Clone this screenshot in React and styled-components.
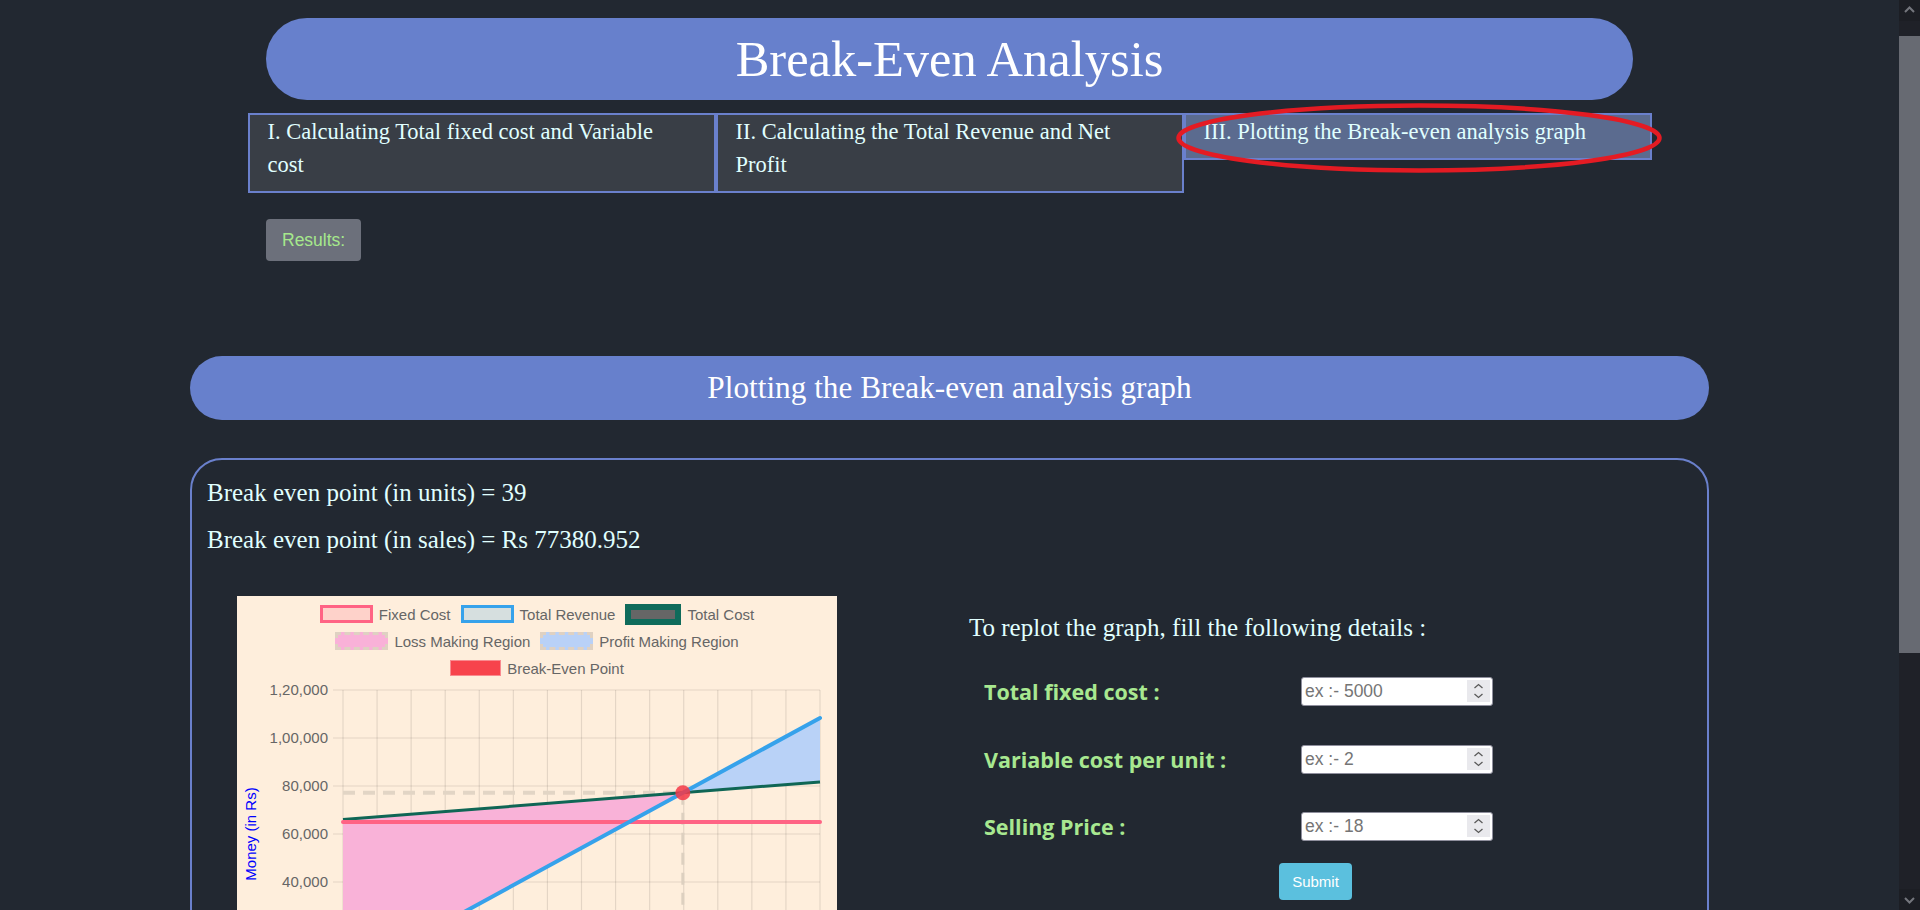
import React from 'react';
import styled, { createGlobalStyle } from 'styled-components';

const GlobalStyle = createGlobalStyle`
  html, body {
    margin: 0;
    padding: 0;
  }
  body {
    background: #222831;
    font-family: 'Liberation Serif', 'Times New Roman', serif;
    overflow-x: hidden;
  }
`;

const Page = styled.div`
  width: calc(100% - 21px);
  min-height: 1200px;
  padding-top: 18px;
  box-sizing: border-box;
`;

// imitation of the browser's dark scrollbar on the right edge
const ScrollBar = styled.div`
  position: fixed;
  top: 0;
  right: 0;
  bottom: 0;
  width: 21px;
  display: flex;
  flex-direction: column;
  background: #1f2128;
`;

const ScrollButton = styled.svg`
  display: block;
  width: 21px;
  height: 21px;
  background: #1c1e24;
`;

const ScrollTrack = styled.div`
  flex: 1;
  padding-top: 15px;
`;

const ScrollThumb = styled.div`
  height: 617px;
  background: #676a72;
`;

const Top = styled.div`
  width: 1404px;
  margin: 0 auto;
`;

const TitlePill = styled.div`
  width: 1367px;
  height: 82px;
  margin: 0 auto;
  border-radius: 41px;
  background: #6780cc;
  display: flex;
  align-items: center;
  justify-content: center;

  h1 {
    margin: 0;
    font-size: 50.5px;
    font-weight: normal;
    color: #ffffff;
  }
`;

const Tabs = styled.div`
  display: grid;
  grid-template-columns: repeat(3, 468px);
  align-items: start;
  margin-top: 13px;
`;

const Tab = styled.div`
  position: relative;
  box-sizing: border-box;
  border: 2px solid #6a80cc;
  background: ${(p) => (p.$active ? '#5b6b8f' : '#393e46')};
  color: #e0ffff;
  font-size: 22.5px;
  line-height: 33px;
  padding: 0 40px 10px 18px;
`;

const Marker = styled.svg`
  position: absolute;
  left: -10px;
  top: -12px;
  width: 486px;
  height: 70px;
  overflow: visible;
  pointer-events: none;
`;

const ResultsButton = styled.button`
  display: block;
  margin: 26px 0 0 18.5px;
  height: 42px;
  padding: 0 16px;
  border: none;
  border-radius: 4px;
  background: #6c707b;
  color: #a6e88c;
  font-family: 'Liberation Sans', Arial, sans-serif;
  font-size: 17.5px;
`;

const SectionPill = styled.div`
  width: 1519px;
  height: 64px;
  margin: 95px auto 0;
  border-radius: 32px;
  background: #6780cc;
  display: flex;
  align-items: center;
  justify-content: center;

  h2 {
    margin: 0;
    font-size: 31.25px;
    font-weight: normal;
    color: #ffffff;
  }
`;

const Card = styled.div`
  width: 1519px;
  box-sizing: border-box;
  margin: 38px auto 0;
  border: 2px solid #6a80cc;
  border-radius: 32px;
  color: #e0ffff;
  padding-bottom: 60px;
`;

const Stats = styled.div`
  padding: 14px 15px 0;

  p {
    margin: 0 0 9.5px;
    font-size: 25px;
    line-height: 37.5px;
  }
`;

const ChartRow = styled.div`
  display: grid;
  grid-template-columns: 1fr 1fr;
  margin-top: 37px;
`;

const ChartBox = styled.div`
  width: 600px;
  margin-left: 45px;
  background: #feeedc;
`;

const Legend = styled.div`
  padding-top: 5px;
`;

const LegendRow = styled.div`
  height: 27px;
  display: flex;
  align-items: center;
  justify-content: center;
  gap: 10px;
`;

const LegendItem = styled.div`
  display: flex;
  align-items: center;
  gap: 6px;
  font-family: 'Liberation Sans', Arial, sans-serif;
  font-size: 15px;
  color: #666666;
`;

const LegendSwatch = styled.span`
  box-sizing: border-box;
  width: ${(p) => 50 + p.$bw}px;
  height: ${(p) => 15 + p.$bw}px;
  background: ${(p) => p.$fill};
  border: ${(p) => p.$bw}px ${(p) => (p.$dashed ? 'dashed' : 'solid')} ${(p) => p.$stroke};
`;

const Plot = styled.svg`
  display: block;
  width: 600px;
  height: 370px;
  font-family: 'Liberation Sans', Arial, sans-serif;
`;

const FormSide = styled.div`
  padding-left: 19.5px;
`;

const Replot = styled.p`
  margin: 13px 0 0;
  font-size: 25px;
  line-height: 37.5px;
`;

const Form = styled.form`
  display: flex;
  flex-direction: column;
  gap: 38.5px;
  margin-top: 31px;
  padding-left: 15px;
`;

const Field = styled.div`
  display: grid;
  grid-template-columns: 317px 192px;
  align-items: center;
`;

const Label = styled.label`
  font-family: 'Open Sans', 'DejaVu Sans', sans-serif;
  font-weight: 700;
  font-size: 21.5px;
  color: #a8e890;
`;

const InputWrap = styled.div`
  position: relative;
  height: 29px;
`;

const NumberInput = styled.input`
  width: 100%;
  height: 100%;
  box-sizing: border-box;
  border: 1px solid #8f8f9d;
  border-radius: 3px;
  padding: 0 30px 0 3px;
  background: #ffffff;
  font-family: 'Liberation Sans', Arial, sans-serif;
  font-size: 17.5px;
  color: #222;
  -moz-appearance: textfield;

  &::placeholder {
    color: #757575;
  }
  &::-webkit-inner-spin-button,
  &::-webkit-outer-spin-button {
    -webkit-appearance: none;
    margin: 0;
  }
`;

const Spinner = styled.svg`
  position: absolute;
  right: 3px;
  top: 3px;
  width: 23px;
  height: 22px;
  pointer-events: none;
`;

const SubmitButton = styled.button`
  width: 73px;
  height: 37px;
  margin: -16.5px 0 0 295px;
  border: none;
  border-radius: 4px;
  background: #5bc0de;
  color: #ffffff;
  font-family: 'Liberation Sans', Arial, sans-serif;
  font-size: 15px;
`;

// chart geometry (svg coordinates)
const X0 = 106;
const X1 = 583;
const Y0 = 296;
const PER = 48 / 20000;
const UMAX = 54.17;
const PRICE = 2000;
const FIXED = 65000;
const TC0 = 66000;
const TC1 = 81700;

const xOf = (u) => X0 + (u / UMAX) * (X1 - X0);
const yOf = (v) => Y0 - v * PER;
const tcAt = (u) => TC0 + ((TC1 - TC0) * u) / UMAX;
const beU = TC0 / (PRICE - (TC1 - TC0) / UMAX);

const yTicks = [
  [120000, '1,20,000'],
  [100000, '1,00,000'],
  [80000, '80,000'],
  [60000, '60,000'],
  [40000, '40,000'],
  [20000, '20,000'],
  [0, '0'],
];

const legendRows = [
  [
    { label: 'Fixed Cost', fill: '#fed2ca', stroke: '#ff6384', bw: 3 },
    { label: 'Total Revenue', fill: '#d6dfdf', stroke: '#36a2eb', bw: 3 },
    { label: 'Total Cost', fill: '#666666', stroke: '#0f6b5b', bw: 6 },
  ],
  [
    { label: 'Loss Making Region', fill: '#f9b1d8', stroke: '#dfd1c2', bw: 3, dashed: true },
    { label: 'Profit Making Region', fill: '#b9d1f7', stroke: '#dfd1c2', bw: 3, dashed: true },
  ],
  [{ label: 'Break-Even Point', fill: '#f7434c', stroke: '#f98a8f', bw: 1 }],
];

const BreakEvenChart = () => {
  const bx = xOf(beU);
  const by = yOf(PRICE * beU);
  const loss = [
    [X0, yOf(TC0)],
    [bx, by],
    [X0, yOf(0)],
  ];
  const profit = [
    [bx, by],
    [X1, yOf(PRICE * UMAX)],
    [X1, yOf(TC1)],
  ];
  const pts = (arr) => arr.map((p) => p.join(',')).join(' ');
  const cols = Array.from({ length: 15 }, (_, i) => X0 + ((X1 - X0) * i) / 14);

  return (
    <ChartBox>
      <Legend>
        {legendRows.map((row, i) => (
          <LegendRow key={i}>
            {row.map((item) => (
              <LegendItem key={item.label}>
                <LegendSwatch $fill={item.fill} $stroke={item.stroke} $bw={item.bw} $dashed={item.dashed} />
                {item.label}
              </LegendItem>
            ))}
          </LegendRow>
        ))}
      </Legend>
      <Plot viewBox="0 0 600 370">
        {yTicks.map(([v]) => (
          <line key={v} x1={X0 - 10} x2={X1} y1={yOf(v)} y2={yOf(v)} stroke="rgba(0,0,0,0.1)" strokeWidth="1.2" />
        ))}
        {cols.map((x, i) => (
          <line key={i} x1={x} x2={x} y1={yOf(120000)} y2={Y0 + 10} stroke="rgba(0,0,0,0.1)" strokeWidth="1.2" />
        ))}
        {yTicks.map(([v, t]) => (
          <text key={t} x={X0 - 15} y={yOf(v)} dy="5" textAnchor="end" fontSize="15" fill="#666">
            {t}
          </text>
        ))}
        {cols.map((x, i) =>
          i % 2 === 0 ? (
            <text key={i} x={x} y={Y0 + 28} textAnchor="middle" fontSize="15" fill="#666">
              {Math.round((UMAX * i) / 14)}
            </text>
          ) : null
        )}
        <text x={(X0 + X1) / 2} y={Y0 + 55} textAnchor="middle" fontSize="15" fill="blue">
          Units
        </text>
        <text transform={`translate(19 152) rotate(-90)`} textAnchor="middle" fontSize="15" fill="blue">
          Money (in Rs)
        </text>

        <polygon points={pts(loss)} fill="#f9b2d8" />
        <polygon points={pts(profit)} fill="#b9d2f7" />

        <line x1={X0} x2={bx} y1={by} y2={by} stroke="#e2d5c5" strokeWidth="4" strokeDasharray="12 8" />
        <line x1={bx} x2={bx} y1={by} y2={Y0} stroke="#ddd0c0" strokeWidth="3" strokeDasharray="12 8" />

        <line x1={X0} x2={X1} y1={yOf(tcAt(0))} y2={yOf(tcAt(UMAX))} stroke="#0f6655" strokeWidth="3" />
        <line x1={X0} x2={X1} y1={yOf(FIXED)} y2={yOf(FIXED)} stroke="#ff6384" strokeWidth="4" strokeLinecap="round" />
        <line x1={X0} x2={X1} y1={yOf(0)} y2={yOf(PRICE * UMAX)} stroke="#36a2eb" strokeWidth="4" strokeLinecap="round" />
        <circle cx={bx} cy={by} r="7.5" fill="rgba(245,55,70,0.85)" />
      </Plot>
    </ChartBox>
  );
};

const Chevrons = () => (
  <Spinner viewBox="0 0 23 22">
    <rect width="23" height="22" fill="#e9e9ed" />
    <path d="M7.5 8 L11.5 4.5 L15.5 8" fill="none" stroke="#5a5a5a" strokeWidth="1.3" />
    <path d="M7.5 14 L11.5 17.5 L15.5 14" fill="none" stroke="#5a5a5a" strokeWidth="1.3" />
  </Spinner>
);

const fields = [
  { id: 'fixed', label: 'Total fixed cost :', placeholder: 'ex :- 5000' },
  { id: 'variable', label: 'Variable cost per unit :', placeholder: 'ex :- 2' },
  { id: 'price', label: 'Selling Price :', placeholder: 'ex :- 18' },
];

const App = () => (
  <Page>
    <GlobalStyle />
    <Top>
      <TitlePill>
        <h1>Break-Even Analysis</h1>
      </TitlePill>
      <Tabs>
        <Tab>I. Calculating Total fixed cost and Variable cost</Tab>
        <Tab>II. Calculating the Total Revenue and Net Profit</Tab>
        <Tab $active>
          III. Plotting the Break-even analysis graph
          <Marker viewBox="0 0 486 70">
            <ellipse cx="243" cy="35" rx="240.5" ry="32.5" fill="none" stroke="#e41b23" strokeWidth="4.5" />
          </Marker>
        </Tab>
      </Tabs>
      <ResultsButton>Results:</ResultsButton>
    </Top>

    <SectionPill>
      <h2>Plotting the Break-even analysis graph</h2>
    </SectionPill>

    <Card>
      <Stats>
        <p>Break even point (in units) = 39</p>
        <p>Break even point (in sales) = Rs 77380.952</p>
      </Stats>
      <ChartRow>
        <div>
          <BreakEvenChart />
        </div>
        <FormSide>
          <Replot>To replot the graph, fill the following details :</Replot>
          <Form onSubmit={(e) => e.preventDefault()}>
            {fields.map((f) => (
              <Field key={f.id}>
                <Label htmlFor={f.id}>{f.label}</Label>
                <InputWrap>
                  <NumberInput id={f.id} type="number" placeholder={f.placeholder} />
                  <Chevrons />
                </InputWrap>
              </Field>
            ))}
            <SubmitButton type="submit">Submit</SubmitButton>
          </Form>
        </FormSide>
      </ChartRow>
    </Card>

    <ScrollBar>
      <ScrollButton viewBox="0 0 21 21">
        <path d="M6 12 L10.5 7.5 L15 12" fill="none" stroke="#74767d" strokeWidth="2" />
      </ScrollButton>
      <ScrollTrack>
        <ScrollThumb />
      </ScrollTrack>
      <ScrollButton viewBox="0 0 21 21">
        <path d="M6 9 L10.5 13.5 L15 9" fill="none" stroke="#74767d" strokeWidth="2" />
      </ScrollButton>
    </ScrollBar>
  </Page>
);

export default App;
